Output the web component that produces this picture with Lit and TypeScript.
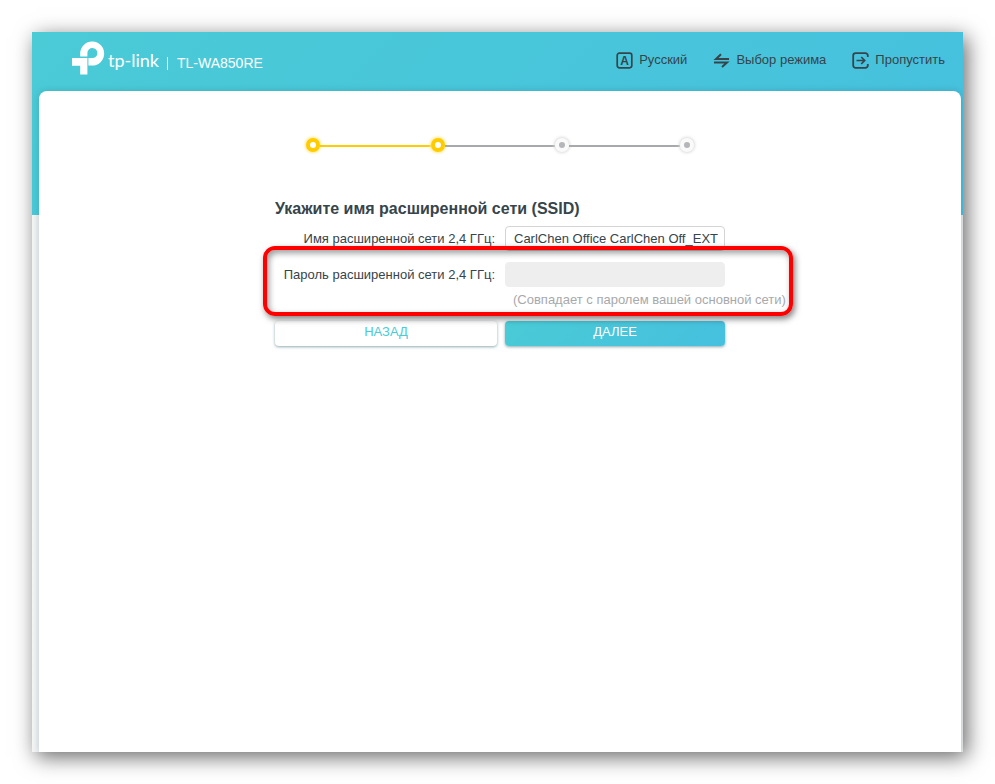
import { LitElement, html, svg, css } from "lit";
import { customElement, property } from "lit/decorators.js";
import { classMap } from "lit/directives/class-map.js";

const languageIcon = svg`
  <rect x="1.2" y="1.2" width="14.6" height="14.6" rx="2.2" fill="none" stroke="currentColor" stroke-width="1.7"/>
  <text x="8.5" y="13" text-anchor="middle" font-size="12" font-weight="700" fill="currentColor">A</text>`;
const modeIcon = svg`
  <path d="M16 7H3L8 2.2M1 10.6h13L9 15" fill="none" stroke="currentColor" stroke-width="2"/>`;
const skipIcon = svg`
  <path d="M15.8 5V3.6A2.4 2.4 0 0 0 13.4 1.2H3.6A2.4 2.4 0 0 0 1.2 3.6v9.8a2.4 2.4 0 0 0 2.4 2.4h9.8a2.4 2.4 0 0 0 2.4-2.4V12" fill="none" stroke="currentColor" stroke-width="1.8"/>
  <path d="M4.5 8.5h8M9.2 5l3.5 3.5L9.2 12" fill="none" stroke="currentColor" stroke-width="1.7"/>`;

@customElement("step-bar")
export class StepBar extends LitElement {
  @property({ type: Number }) total = 4;
  @property({ type: Number }) current = 2;

  static styles = css`
    :host { display: block; }
    ol { display: flex; align-items: center; width: 388px; max-width: 100%; margin: 0 auto; padding: 0; list-style: none; }
    li { display: flex; align-items: center; flex: 1; }
    li:first-child { flex: none; }
    .line { flex: 1; height: 2px; margin-top: 2px; background: #a7a9ac; }
    .dot { box-sizing: border-box; width: 14px; height: 14px; border-radius: 50%; border: 4px solid #fafafa; background: #b5b6b9; box-shadow: 0 0 3px 1px #dcdcdc; }
    .done .dot { border-color: #fc0; background: #fff; box-shadow: 0 0 3px 1px #ffe680; }
    .done .line { background: #fc0; }
  `;

  render() {
    return html`<ol aria-label="Шаги настройки">
      ${Array.from({ length: this.total }, (_, i) => html`
        <li class=${classMap({ done: i < this.current })}>
          ${i ? html`<span class="line"></span>` : null}<span class="dot"></span>
        </li>`)}
    </ol>`;
  }
}

@customElement("app-root")
export class AppRoot extends LitElement {
  static styles = css`
    :host { display: block; box-sizing: border-box; min-height: 100vh; padding: 32px; background: #fff; color: #36444b; font: 13px/18px "Liberation Sans", Arial, sans-serif; }
    * { box-sizing: border-box; }
    .window { display: flex; flex-direction: column; min-height: calc(100vh - 64px); background: linear-gradient(135deg, #4acbd6, #46c0df) top / 100% 183px no-repeat, linear-gradient(90deg, #f4f6f6, #eceeef 7px, #e6e6e6); box-shadow: 4px 5px 20px 0 rgba(0, 0, 0, 0.6); }
    header { display: flex; align-items: center; justify-content: space-between; height: 59px; padding: 0 18px 4px 40px; }
    .brand { display: flex; align-items: center; color: #fff; }
    .mark { width: 33px; height: 34px; margin-bottom: 4px; }
    .name { margin-left: 3px; font: 18px/24px Lato, sans-serif; }
    .model { margin: 8px 0 0 8px; padding-left: 9px; border-left: 1px solid #fff; font-size: 14px; line-height: 13px; }
    nav { display: flex; gap: 26px; }
    nav a { display: flex; align-items: center; gap: 6px; color: inherit; text-decoration: none; }
    nav svg { width: 17px; height: 17px; margin-top: 2px; }
    main { flex: 1; margin: 0 2px 0 7px; padding: 47px 16px 16px; background: #fff; border-radius: 8px 8px 0 0; box-shadow: 0 0 7px rgba(0, 40, 50, 0.18); clip-path: inset(-8px -2px 0 -7px); }
    form { position: relative; width: 450px; max-width: 100%; margin: 46px auto 0; }
    h1 { margin: 0; padding: 1px 0 7px; font-size: 16px; line-height: 20px; }
    .grid { display: grid; grid-template-columns: 222px 220px; column-gap: 8px; }
    label { padding-right: 2px; line-height: 25px; text-align: right; white-space: nowrap; }
    input { width: 100%; height: 25px; margin: 0 0 11px; padding: 0 0 0 8px; border: 1px solid #d2d4d6; border-radius: 4px; background: #fff; color: inherit; font: inherit; }
    input:disabled { margin: 0; border-color: #eee; background: #eee; }
    .hint { grid-column: 2; margin: 4px 0 12px; padding-left: 8px; color: #a7a9ac; white-space: nowrap; }
    button { height: 25px; padding: 0 0 4px; border: 0; border-radius: 4px; font: inherit; box-shadow: 0 1px 3px rgba(30, 90, 100, 0.5); }
    .back { background: #fff; color: #4acbd6; }
    .next { background: linear-gradient(135deg, #4acbd6, #46c0df); color: #fff; }
    .highlight { position: absolute; inset: 48px -68px 30px -12px; border: 4px solid #f00; border-radius: 12px; box-shadow: 2px 3px 6px rgba(0, 0, 0, 0.5), inset 2px 3px 6px rgba(0, 0, 0, 0.4); pointer-events: none; }
  `;

  private link(icon: unknown, text: string) {
    return html`<a href="#"><svg viewBox="0 0 17 17" aria-hidden="true">${icon}</svg>${text}</a>`;
  }

  render() {
    return html`
      <div class="window">
        <header>
          <div class="brand">
            <svg class="mark" viewBox="0 0 33 34" aria-hidden="true">
              <path fill="#fff" d="M8.2 15.6V12A12 12 0 1 1 20.2 24.6H16.4V17H20.2A5 5 0 1 0 15.4 12V15.6ZM0 17H15.4V33.4H8.2V24.8H0Z"/>
            </svg>
            <span class="name">tp-link</span>
            <span class="model">TL-WA850RE</span>
          </div>
          <nav>
            ${this.link(languageIcon, "Русский")}
            ${this.link(modeIcon, "Выбор режима")}
            ${this.link(skipIcon, "Пропустить")}
          </nav>
        </header>
        <main>
          <step-bar total="4" current="2"></step-bar>
          <form @submit=${(e: Event) => e.preventDefault()}>
            <h1>Укажите имя расширенной сети (SSID)</h1>
            <div class="grid">
              <label for="ssid">Имя расширенной сети 2,4 ГГц:</label>
              <input id="ssid" type="text" value="CarlChen Office CarlChen Off_EXT">
              <label for="password">Пароль расширенной сети 2,4 ГГц:</label>
              <input id="password" type="password" aria-describedby="hint" disabled>
              <p class="hint" id="hint">(Совпадает с паролем вашей основной сети)</p>
              <button class="back" type="button">НАЗАД</button>
              <button class="next" type="submit">ДАЛЕЕ</button>
            </div>
            <div class="highlight"></div>
          </form>
        </main>
      </div>`;
  }
}
